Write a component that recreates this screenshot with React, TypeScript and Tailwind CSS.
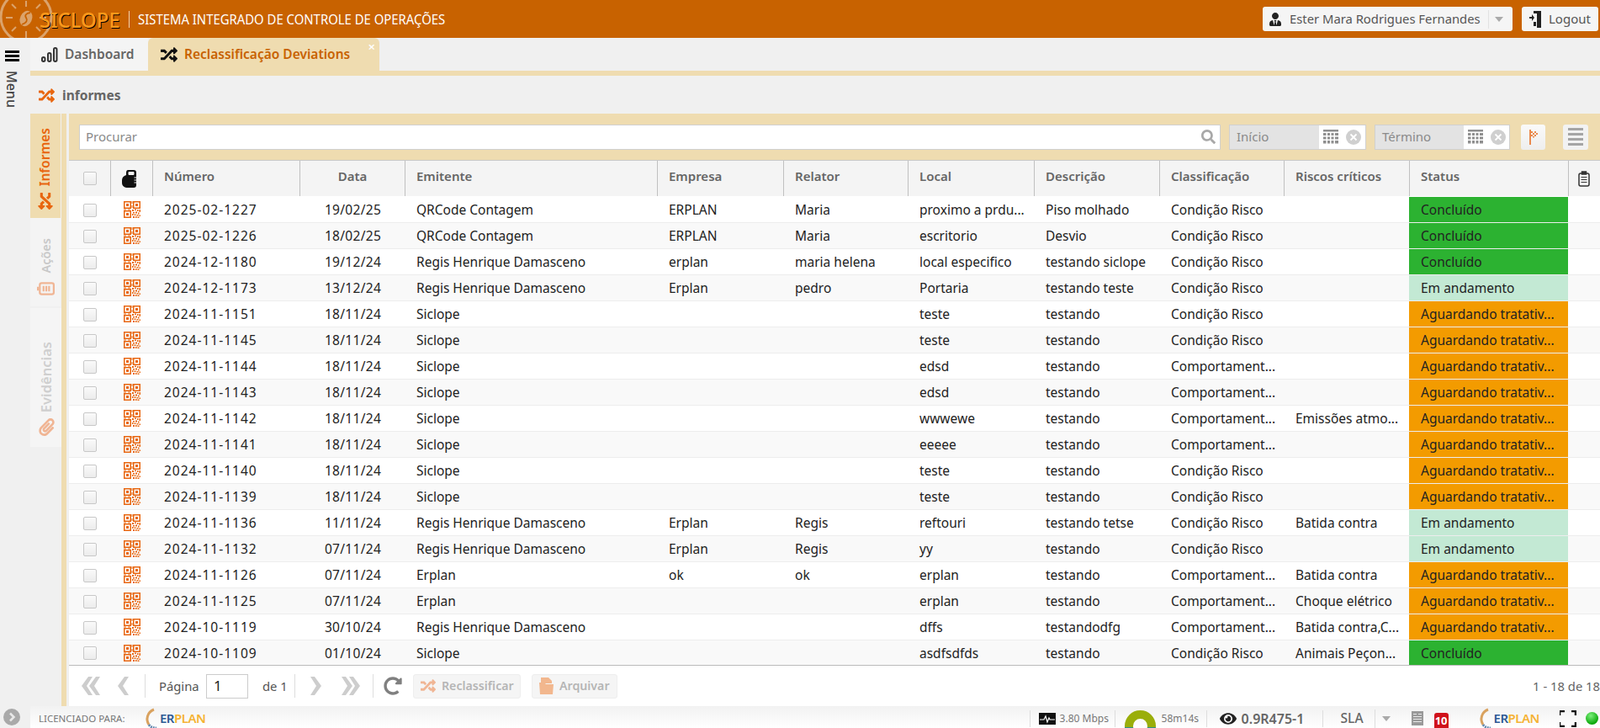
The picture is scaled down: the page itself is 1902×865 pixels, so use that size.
import React from "react";
import { FaRandom, FaSearch, FaUserTie, FaPaperclip, FaEye, FaRedoAlt } from "react-icons/fa";

const rows: [string, string, string, string, string, string, string, string, string, string][] = [
  ["2025-02-1227", "19/02/25", "QRCode Contagem", "ERPLAN", "Maria", "proximo a prdu...", "Piso molhado", "Condição Risco", "", "Concluído"],
  ["2025-02-1226", "18/02/25", "QRCode Contagem", "ERPLAN", "Maria", "escritorio", "Desvio", "Condição Risco", "", "Concluído"],
  ["2024-12-1180", "19/12/24", "Regis Henrique Damasceno", "erplan", "maria helena", "local especifico", "testando siclope", "Condição Risco", "", "Concluído"],
  ["2024-12-1173", "13/12/24", "Regis Henrique Damasceno", "Erplan", "pedro", "Portaria", "testando teste", "Condição Risco", "", "Em andamento"],
  ["2024-11-1151", "18/11/24", "Siclope", "", "", "teste", "testando", "Condição Risco", "", "Aguardando tratativ..."],
  ["2024-11-1145", "18/11/24", "Siclope", "", "", "teste", "testando", "Condição Risco", "", "Aguardando tratativ..."],
  ["2024-11-1144", "18/11/24", "Siclope", "", "", "edsd", "testando", "Comportament...", "", "Aguardando tratativ..."],
  ["2024-11-1143", "18/11/24", "Siclope", "", "", "edsd", "testando", "Comportament...", "", "Aguardando tratativ..."],
  ["2024-11-1142", "18/11/24", "Siclope", "", "", "wwwewe", "testando", "Comportament...", "Emissões atmo...", "Aguardando tratativ..."],
  ["2024-11-1141", "18/11/24", "Siclope", "", "", "eeeee", "testando", "Comportament...", "", "Aguardando tratativ..."],
  ["2024-11-1140", "18/11/24", "Siclope", "", "", "teste", "testando", "Condição Risco", "", "Aguardando tratativ..."],
  ["2024-11-1139", "18/11/24", "Siclope", "", "", "teste", "testando", "Condição Risco", "", "Aguardando tratativ..."],
  ["2024-11-1136", "11/11/24", "Regis Henrique Damasceno", "Erplan", "Regis", "reftouri", "testando tetse", "Condição Risco", "Batida contra", "Em andamento"],
  ["2024-11-1132", "07/11/24", "Regis Henrique Damasceno", "Erplan", "Regis", "yy", "testando", "Condição Risco", "", "Em andamento"],
  ["2024-11-1126", "07/11/24", "Erplan", "ok", "ok", "erplan", "testando", "Comportament...", "Batida contra", "Aguardando tratativ..."],
  ["2024-11-1125", "07/11/24", "Erplan", "", "", "erplan", "testando", "Comportament...", "Choque elétrico", "Aguardando tratativ..."],
  ["2024-10-1119", "30/10/24", "Regis Henrique Damasceno", "", "", "dffs", "testandodfg", "Comportament...", "Batida contra,C...", "Aguardando tratativ..."],
  ["2024-10-1109", "01/10/24", "Siclope", "", "", "asdfsdfds", "testando", "Condição Risco", "Animais Peçon...", "Concluído"],
];

const gridCols = "grid grid-cols-[49px_50px_175px_125px_300px_150px_148px_150px_149px_148px_149px_189px_38px]";

function statusClass(s: string) {
  if (s === "Concluído") return "bg-[#2cb231]";
  if (s === "Em andamento") return "bg-[#c3e9d4]";
  return "bg-[#f39b00]";
}

function Qr() {
  return (
    <svg width="20" height="20" viewBox="0 0 20 20" fill="#e8660f">
      <path fillRule="evenodd" d="M0 0h9v9H0zM1.500 1.500v6h6v-6zM11 0h9v9h-9zM12.500 1.500v6h6v-6zM0 11h9v9H0zM1.500 12.500v6h6v-6z" />
      <path d="M3 3h3v3H3zM14 3h3v3h-3zM3 14h3v3H3zM9.500 0h1v3h-1zM9.500 5h1v3h-1zM0 9.500h3v1H0zM5 9.500h3v1H5zM10 10h2v2h-2zM13 9.500h2v1.500h-2zM16 10h1.500v2H16zM18.500 10h1.500v3h-1.500zM11 13h2v1.500h-2zM14 12.500h2v2h-2zM17 13.500h1.500v2H17zM10 15h1.500v2H10zM12.500 15.500h2v1.500h-2zM15.500 16h2v1.500h-2zM18.500 16.500h1.500v1.500h-1.500zM11 18h2v2h-2zM14 18h1.500v2H14zM16.500 18.500h2v1.500h-2z" />
    </svg>
  );
}

function Checkbox() {
  return <span className="block h-[16px] w-[16px] rounded-[2px] border border-[#c8c8c8] bg-gradient-to-b from-[#fafafa] to-[#ececec]" />;
}

function GridIcon() {
  return (
    <svg width="18" height="17" viewBox="0 0 18 17" fill="#8f8f8f">
      <path d="M0 0h18v2.500H0zM0 4h3.500v3H0zM5 4h3v3H5zM9.500 4h3v3h-3zM14 4h4v3h-4zM0 8.500h3.500v3H0zM5 8.500h3v3H5zM9.500 8.500h3v3h-3zM14 8.500h4v3h-4zM0 13h3.500v3.500H0zM5 13h3v3.500H5zM9.500 13h3v3.500h-3zM14 13h4v3.500h-4z" />
    </svg>
  );
}

function ClearIcon() {
  return (
    <svg width="18" height="18" viewBox="0 0 18 18">
      <circle cx="9" cy="9" r="9" fill="#cfcfcf" />
      <path d="M5.500 5.500l7 7M12.500 5.500l-7 7" stroke="#fff" strokeWidth="1.800" />
    </svg>
  );
}

function DateBox({ label, w, gray }: { label: string; w: string; gray: string }) {
  return (
    <div className={`flex h-[30px] ${w} border border-[#d0d0d0] bg-white`}>
      <div className={`flex ${gray} items-center bg-[#e3e3e3] pl-[8px] text-[15px] text-[#8a8a8a]`}>{label}</div>
      <div className="flex flex-1 items-center gap-[9px] pl-[5px]">
        <GridIcon />
        <ClearIcon />
      </div>
    </div>
  );
}

function Chevron({ dir, double }: { dir: "l" | "r"; double?: boolean }) {
  const pts = dir === "l" ? "8,0 13,0 6,11 13,22 8,22 0,11" : "0,0 5,0 13,11 5,22 0,22 7,11";
  return (
    <svg width={double ? 22 : 13} height="22" viewBox={`0 0 ${double ? 22 : 13} 22`} fill="#cdcdcd">
      <polygon points={pts} />
      {double && <polygon points={pts} transform="translate(9 0)" />}
    </svg>
  );
}

function Erplan() {
  return (
    <div className="flex items-center gap-[2px]">
      <svg width="17" height="26" viewBox="0 0 17 26" fill="none">
        <path d="M12 2C4 5 2 14 6 20" stroke="#d9a25f" strokeWidth="3" />
        <path d="M6 20c2 3 5 4 9 4" stroke="#5f86ad" strokeWidth="3" strokeDasharray="2 1" />
      </svg>
      <span className="font-['Open_Sans',sans-serif] text-[15px] leading-none font-semibold tracking-[-0.5px]">
        <span className="text-[#2d5a94]">ER</span>
        <span className="text-[#f5b335]">PLAN</span>
      </span>
    </div>
  );
}

function SideTab({ label, icon, cls, text, iconCls }: { label: string; icon: React.ReactNode; cls: string; text: string; iconCls: string }) {
  return (
    <div className={`flex flex-col items-center justify-end ${cls}`}>
      <span className={`rotate-180 [writing-mode:vertical-rl] font-['Open_Sans',sans-serif] ${text} leading-none font-semibold`}>{label}</span>
      <div className={`flex justify-center ${iconCls}`}>{icon}</div>
    </div>
  );
}

export default function App() {
  return (
    <div className="flex h-screen w-full flex-col overflow-hidden bg-[#f0f0f0] font-['Noto_Sans',sans-serif] text-[#222]">
      {/* Header */}
      <header className="relative flex h-[45px] shrink-0 items-center bg-[#c86200] pr-[2px]">
        <svg className="absolute top-0 left-0" width="64" height="45" viewBox="0 0 64 45" fill="none" stroke="#dba36b" strokeWidth="3">
          <circle cx="31" cy="20" r="30" />
          <path d="M31 1v7M31 37v8M7 21h8M47 21h8M14 5l5 5M48 5l-5 5M14 37l5-5M48 37l-5-5" strokeWidth="2" />
          <ellipse cx="31" cy="22" rx="7" ry="9.500" transform="rotate(25 31 22)" fill="#dba36b" stroke="none" />
          <path d="M36 15c-5 1-7 3-5 6s1 6-5 8" stroke="#c86200" strokeWidth="1.800" />
        </svg>
        <span className="relative ml-[47px] w-[95px] origin-left scale-x-[0.92] text-[26px] leading-none font-medium whitespace-nowrap text-[#ff9a1a] [text-shadow:1px_1px_0_#000]">SICLOPE</span>
        <span className="ml-[11px] h-[20px] w-px bg-[#f0d0b0]" />
        <span className="ml-[10px] w-[366px] origin-left scale-x-[0.875] text-[17px] leading-none whitespace-nowrap text-white">SISTEMA INTEGRADO DE CONTROLE DE OPERAÇÕES</span>
        <div className="ml-auto flex items-center gap-[11px]">
          <div className="flex h-[29px] w-[297px] items-center rounded-[3px] bg-[#f5f5f5] text-[#555]">
            <FaUserTie className="mr-[9px] ml-[7px] text-[16px] text-[#222]" />
            <span className="w-[236px] text-[14.800px] whitespace-nowrap">Ester Mara Rodrigues Fernandes</span>
            <span className="h-[22px] w-px bg-[#e2e2e2]" />
            <span className="ml-[7px] h-0 w-0 border-x-[5px] border-t-[6px] border-x-transparent border-t-[#aaa]" />
          </div>
          <div className="flex h-[29px] w-[91px] items-center rounded-[3px] bg-[#f5f5f5] text-[15px] text-[#555]">
            <svg className="mr-[9px] ml-[9px]" width="14" height="20" viewBox="0 0 14 20" fill="#222">
              <path d="M5 0h9v20H9V3H5zM0 7h3V4l3 4-3 4V9H0zM5 13h3v5H5z" />
            </svg>
            Logout
          </div>
        </div>
      </header>

      {/* Middle */}
      <div className="flex min-h-0 flex-1">
        <aside className="flex w-[36px] shrink-0 flex-col items-center pt-[15px] pr-[8px]">
          <div className="flex w-[17px] flex-col gap-[2px]">
            <span className="h-[3px] bg-black" />
            <span className="h-[3px] bg-black" />
            <span className="h-[3px] bg-black" />
          </div>
          <span className="mt-[11px] text-[16px] leading-none font-medium text-[#444] [writing-mode:vertical-rl]">Menu</span>
        </aside>

        <main className="flex min-w-0 flex-1 flex-col">
          {/* Tabs */}
          <div className="flex h-[39px] shrink-0">
            <div className="flex w-[140px] items-center bg-[#f4f4f4] pl-[13px] text-[15.500px] font-semibold text-[#666]">
              <svg className="mr-[8px]" width="20" height="20" viewBox="0 0 20 20" fill="none" stroke="#333" strokeWidth="2">
                <rect x="1" y="13" width="3.500" height="5" rx="1.700" />
                <rect x="8" y="8" width="3.500" height="10" rx="1.700" />
                <rect x="15" y="2" width="3.500" height="16" rx="1.700" />
              </svg>
              Dashboard
            </div>
            <div className="relative flex w-[275px] items-center rounded-t-[6px] bg-[#efdcb0] pl-[15px] text-[15.500px] font-semibold text-[#c86200]">
              <FaRandom className="mr-[8px] text-[20px] text-[#111]" />
              Reclassificação Deviations
              <span className="absolute top-[1px] right-[5px] text-[15px] leading-[18px] text-white">×</span>
            </div>
          </div>
          <div className="h-[6px] shrink-0 bg-[#efdcb0]" />

          {/* Page title */}
          <div className="flex h-[45px] shrink-0 items-center pt-[2px] pl-[10px]">
            <FaRandom className="mr-[9px] text-[19px] text-[#e8660f]" />
            <span className="font-['Liberation_Sans',sans-serif] text-[15.500px] font-bold text-[#666]">informes</span>
          </div>

          {/* Body */}
          <div className="flex min-h-0 flex-1">
            <div className="flex w-[37px] shrink-0 flex-col">
              <SideTab
                label="Informes"
                text="text-[15.500px]"
                iconCls="mt-[8px] mb-[10px]"
                cls="h-[124px] w-[36px] bg-[#efdcb0] text-[#e8660f]"
                icon={<FaRandom className="rotate-90 text-[20px] text-[#e8660f]" />}
              />
              <SideTab
                label="Ações"
                text="text-[14.500px]"
                iconCls="mt-[10px] mb-[13px]"
                cls="h-[105px] w-[36px] bg-[#f4f4f4] text-[#c8c8c8]"
                icon={
                  <svg width="21" height="16" viewBox="0 0 19 14" fill="none" stroke="#f0b594" strokeWidth="2">
                    <rect x="3" y="1" width="15" height="12" rx="2" />
                    <path d="M1 5v4M7 4v6M10 4v6M13 4v6" />
                  </svg>
                }
              />
              <SideTab
                label="Evidências"
                text="text-[16.500px]"
                iconCls="mt-[7px] mb-[13px]"
                cls="mt-[2px] h-[165px] w-[38px] bg-[#f5f5f5] text-[#cfcfcf]"
                icon={<FaPaperclip className="text-[21px] text-[#f0b594]" />}
              />
            </div>
            <div className="w-[6px] shrink-0 bg-[#efdcb0]" />
            <div className="ml-[3px] flex min-w-0 flex-1 flex-col">
              {/* Toolbar */}
              <div className="flex h-[55px] shrink-0 items-center bg-[#efdcb0] pl-[12px]">
                <div className="flex h-[30px] w-[1357px] items-center justify-between border border-[#d0d0d0] bg-white pr-[5px] pl-[7px] text-[15px] text-[#8a8a8a]">
                  Procurar
                  <FaSearch className="text-[17px] text-[#a8a8a8]" />
                </div>
                <div className="ml-[10px]"><DateBox label="Início" w="w-[163px]" gray="w-[106px]" /></div>
                <div className="ml-[10px]"><DateBox label="Término" w="w-[161px]" gray="w-[105px]" /></div>
                <button className="ml-[13px] flex h-[30px] w-[29px] items-center justify-center rounded-[3px] bg-gradient-to-b from-[#fafafa] to-[#eeeeee]">
                  <svg width="12" height="18" viewBox="0 0 12 18">
                    <path d="M1 0h2v18H1z" fill="#ea8a4e" />
                    <path d="M3 2h2v2H3zM7 2h2v2H7zM5 4h2v2H5zM9 4h2v2H9zM3 6h2v2H3zM7 6h2v2H7zM5 8h2v1.500H5z" fill="#ea8a4e" />
                  </svg>
                </button>
                <button className="ml-[21px] flex h-[30px] w-[30px] flex-col items-center justify-center gap-[3px] rounded-[3px] bg-[#f2f2f2]">
                  <span className="h-[3px] w-[18px] bg-[#a5a5a5]" />
                  <span className="h-[3px] w-[18px] bg-[#a5a5a5]" />
                  <span className="h-[3px] w-[18px] bg-[#a5a5a5]" />
                  <span className="h-[3px] w-[18px] bg-[#a5a5a5]" />
                </button>
              </div>

              {/* Table head */}
              <div className={`${gridCols} h-[43px] shrink-0 border-t border-[#c8c8c8] bg-[#f4f4f4] text-[15px] font-semibold text-[#666]`}>
                <div className="flex items-center justify-center"><Checkbox /></div>
                <div className="flex items-center justify-center border-l border-[#c0c0c0] pr-[6px]">
                  <svg width="17" height="21" viewBox="0 0 17 21">
                    <path d="M7 0h7c2 0 3 1 3 3v15c0 2-1 3-3 3H7c-4 0-7-2-7-6v-3c0-3 2-5 5-6V3c0-2 1-3 2-3z" fill="#111" />
                    <path d="M8 2.500h6v3H8zM14.500 9H17M14.500 12H17M14.500 15H17" stroke="#f4f4f4" strokeWidth="1" fill="#f4f4f4" />
                  </svg>
                </div>
                <div className="flex items-center border-l border-[#c0c0c0] pb-[5px] pl-[13px]">Número</div>
                <div className="flex items-center justify-center border-l border-[#c0c0c0] pb-[5px]">Data</div>
                {["Emitente", "Empresa", "Relator", "Local", "Descrição", "Classificação", "Riscos críticos", "Status"].map((h) => (
                  <div key={h} className="flex items-center border-l border-[#c0c0c0] pb-[5px] pl-[13px] whitespace-nowrap">{h}</div>
                ))}
                <div className="flex items-center justify-center border-l border-[#c0c0c0] pr-[2px]">
                  <svg width="14" height="19" viewBox="0 0 14 19" fill="none" stroke="#333" strokeWidth="1.500">
                    <rect x="1" y="3" width="12" height="15" rx="2" />
                    <rect x="4.500" y="1" width="5" height="3" fill="#333" />
                    <path d="M3.500 7.500h7M3.500 10.500h7M3.500 13.500h7" strokeWidth="1.200" />
                  </svg>
                </div>
              </div>

              {/* Rows */}
              <div className="shrink-0 border-b border-[#bbb]">
                {rows.map((r, i) => (
                  <div
                    key={r[0]}
                    className={`${gridCols} ${i === rows.length - 1 ? "h-[30px]" : "h-[31px]"} border-t text-[15.500px] ${i === 0 ? "border-white" : "border-[#ededed]"} ${i % 2 ? "bg-[#f9f9f9]" : "bg-white"}`}
                  >
                    <div className="flex items-center justify-center pt-[1px]"><Checkbox /></div>
                    <div className="flex items-center justify-center pl-[1px]"><Qr /></div>
                    <div className="flex items-center pt-[2px] pl-[14px] tracking-[1px]">{r[0]}</div>
                    <div className="flex items-center justify-center pt-[2px] pl-[2px] tracking-[0.3px]">{r[1]}</div>
                    {r.slice(2, 9).map((c, j) => (
                      <div key={j} className="flex items-center pt-[2px] pl-[14px] whitespace-nowrap">{c}</div>
                    ))}
                    <div className={`flex items-center pt-[2px] pl-[14px] whitespace-nowrap ${statusClass(r[9])}`}>{r[9]}</div>
                    <div />
                  </div>
                ))}
              </div>

              {/* Pager */}
              <div className="flex min-h-0 flex-1 items-center bg-white text-[14.800px] text-[#555]">
                <div className="ml-[15px]"><Chevron dir="l" double /></div>
                <div className="ml-[21px]"><Chevron dir="l" /></div>
                <span className="ml-[19px] h-[28px] w-px bg-[#ddd]" />
                <span className="ml-[16px] w-[56px]">Página</span>
                <div className="flex h-[29px] w-[50px] items-center border border-[#ccc] pl-[8px] text-[17px] text-[#222]">1</div>
                <span className="ml-[17px] w-[38px] whitespace-nowrap">de 1</span>
                <span className="h-[28px] w-px bg-[#ddd]" />
                <div className="ml-[18px]"><Chevron dir="r" /></div>
                <div className="ml-[24px]"><Chevron dir="r" double /></div>
                <span className="ml-[15px] h-[28px] w-px bg-[#ddd]" />
                <FaRedoAlt className="ml-[12px] text-[22px] text-[#808080]" />
                <div className="ml-[13px] flex h-[29px] w-[128px] items-center rounded-[3px] border border-[#eee] bg-[#f5f5f5] pl-[8px] text-[14.200px] font-semibold text-[#b5b5b5]">
                  <FaRandom className="mr-[7px] text-[18px] text-[#f0b594]" />
                  Reclassificar
                </div>
                <div className="ml-[13px] flex h-[29px] w-[102px] items-center rounded-[3px] border border-[#eee] bg-[#f5f5f5] pl-[7px] text-[14.200px] font-semibold text-[#b5b5b5]">
                  <svg className="mr-[6px]" width="19" height="20" viewBox="0 0 19 20" fill="#f2b78e">
                    <path d="M3 0h9l4 4v3H3zM1 6h6l2 2h9l-1 12H2z" />
                  </svg>
                  Arquivar
                </div>
                <span className="ml-auto text-[#666]">1 - 18 de 18</span>
              </div>
            </div>
          </div>
        </main>
      </div>

      {/* Status bar */}
      <footer className="flex h-[26px] shrink-0 items-center overflow-hidden">
        <div className="flex h-full w-[36px] shrink-0 items-center pl-[4px]">
          <svg width="20" height="20" viewBox="0 0 20 20">
            <circle cx="10" cy="10" r="10" fill="#a9a9a9" />
            <path d="M8 5.500l4.500 4.500L8 14.500" fill="none" stroke="#e8e8e8" strokeWidth="2.500" />
          </svg>
        </div>
        <div className="flex h-full min-w-0 flex-1 items-center bg-gradient-to-b from-[#f2f2f2] to-white pt-[3px] text-[#777]">
          <span className="ml-[10px] w-[125px] text-[11.500px] whitespace-nowrap">LICENCIADO PARA:</span>
          <Erplan />
          <span className="ml-auto h-[20px] w-px bg-[#ddd]" />
          <svg className="ml-[10px]" width="20" height="14" viewBox="0 0 20 14">
            <rect width="20" height="14" fill="#111" />
            <path d="M1 8h5l2-4 2 7 2-5 1 2h6" fill="none" stroke="#fff" strokeWidth="1.200" />
          </svg>
          <span className="ml-[5px] w-[65px] text-[12px] whitespace-nowrap">3.80 Mbps</span>
          <span className="h-[20px] w-px bg-[#ddd]" />
          <div className="relative ml-[11px] h-[26px] w-[37px] self-end overflow-hidden">
            <svg className="absolute top-[5px] left-0" width="37" height="37" viewBox="0 0 37 37">
              <circle cx="18.500" cy="18.500" r="13.500" fill="none" stroke="#9aae0a" strokeWidth="10" />
              <path d="M0 20.500h10M27 20.500h10" stroke="#2f8f8a" strokeWidth="1" />
            </svg>
          </div>
          <span className="ml-[7px] w-[53px] text-[12px] whitespace-nowrap">58m14s</span>
          <span className="h-[20px] w-px bg-[#ddd]" />
          <FaEye className="ml-[15px] text-[20px] text-[#222]" />
          <span className="ml-[6px] w-[96px] text-[16px] font-semibold whitespace-nowrap text-[#666]">0.9R475-1</span>
          <span className="h-[20px] w-px bg-[#ddd]" />
          <span className="ml-[21px] w-[40px] text-[15.500px] font-medium text-[#666]">SLA</span>
          <span className="h-[22px] w-px bg-[#ddd]" />
          <span className="ml-[8px] h-0 w-0 border-x-[5px] border-t-[6px] border-x-transparent border-t-[#aaa]" />
          <svg className="ml-[25px]" width="14" height="17" viewBox="0 0 14 17" fill="#9a9a9a">
            <path d="M0 0h14v17H0z" />
            <path d="M2 3h4v1H2zM8 3h4v1H8zM2 6h10v1H2zM2 9h10v1H2zM2 12h10v1H2z" fill="#e8e8e8" />
          </svg>
          <span className="ml-[13px] flex h-[18px] w-[17px] items-center justify-center self-end rounded-t-[3px] bg-[#d0121b] text-[13px] leading-none font-bold text-white">10</span>
          <div className="ml-[35px]"><Erplan /></div>
          <svg className="ml-[24px]" width="20" height="20" viewBox="0 0 20 20" fill="none" stroke="#111" strokeWidth="2.500">
            <path d="M0 6V1h6M14 1h5v5M0 14v5h6M14 19h5v-5" />
          </svg>
          <span className="mr-[2px] ml-[11px] h-[15px] w-[15px] rounded-full bg-[radial-gradient(circle_at_40%_30%,#7cf07c,#0aa80a_70%)]" />
        </div>
      </footer>
    </div>
  );
}
